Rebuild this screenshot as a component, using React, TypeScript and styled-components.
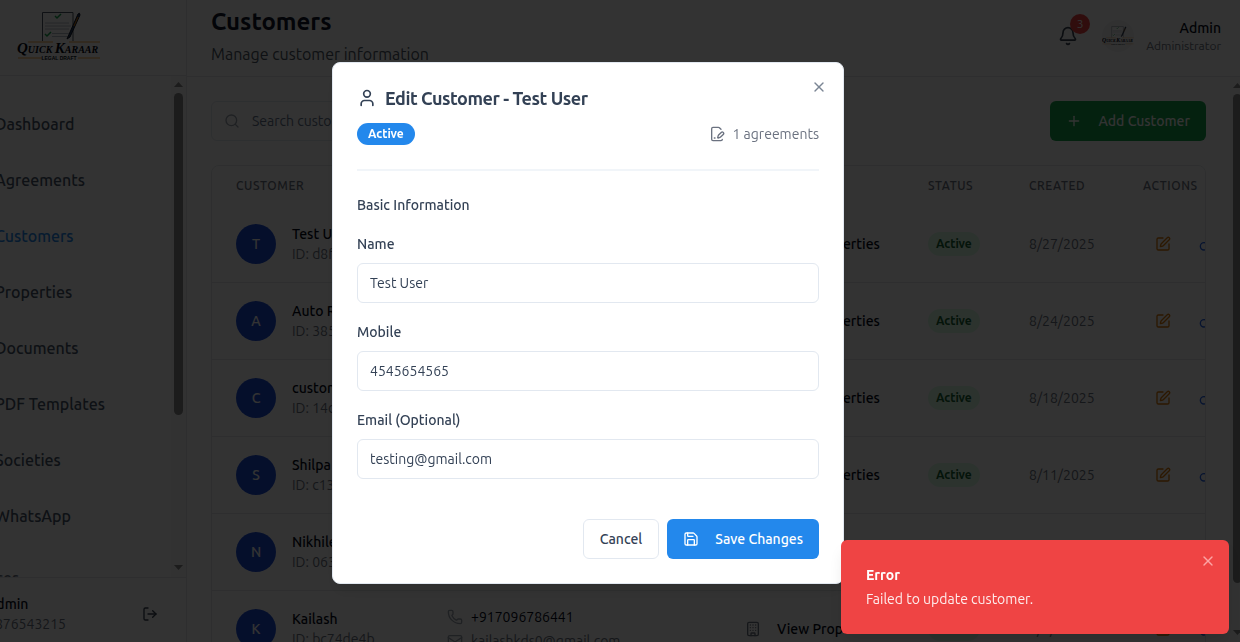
import React from "react";
import styled, { createGlobalStyle, css } from "styled-components";
import { Bell, Building, FileText, Key, LayoutDashboard, LogOut, Mail, Phone, Plus, Save, Search, SquarePen, User, X } from "lucide-react";

const GlobalStyle = createGlobalStyle`
  *, *::before, *::after { box-sizing: border-box; }
  body {
    margin: 0;
    background: #ffffff;
    color: #020817;
    font-family: Ubuntu, "Open Sans", "Noto Sans", sans-serif;
    font-size: 14px;
    line-height: 20px;
    overflow: hidden;
  }
  button, input { font: inherit; color: inherit; }
  h1, h2, h3, p { margin: 0; }
`;

const Viewport = styled.div`
  height: 100vh;
  overflow: hidden;
`;

/* The shell is wider than the window and scrolled a little sideways. */
const Shell = styled.div`
  display: flex;
  height: 100%;
  margin: 0 -5px 0 -69px;
`;

const Sidebar = styled.aside`
  display: flex;
  flex-direction: column;
  flex: none;
  width: 256px;
  border-right: 1px solid #e5e7eb;
`;

const Brand = styled.div`
  display: flex;
  align-items: center;
  justify-content: center;
  flex: none;
  height: 76px;
  padding-bottom: 4px;
  border-bottom: 1px solid #e5e7eb;
`;

const Scroller = styled.div`
  display: flex;
  flex: 1;
  min-height: 0;
`;

const Nav = styled.nav`
  display: flex;
  flex-direction: column;
  flex: 1;
  gap: 8px;
  padding: 24px 0 0 16px;
  overflow: hidden;
`;

const NavLink = styled.a<{ $active?: boolean }>`
  display: flex;
  align-items: center;
  flex: none;
  gap: 16px;
  height: 48px;
  padding: 0 12px;
  color: ${(p) => (p.$active ? "#2388ec" : "#475569")};
  font-size: 16px;
  font-weight: 500;
  line-height: 24px;
  text-decoration: none;
  white-space: nowrap;
`;

const NavGroup = styled.div`
  flex: none;
  padding: 18px 12px 0;
  color: #6b7280;
  font-size: 16px;
  font-weight: 500;
  line-height: 24px;
`;

const Bar = styled.div`
  display: flex;
  flex-direction: column;
  align-items: center;
  flex: none;
  width: 15px;
  background: #fafafa;
`;

const Arrow = styled.svg`
  flex: none;
  width: 9px;
  height: 17px;
  fill: #8b8b8b;
`;

const Track = styled.div`
  flex: 1;
  width: 9px;
`;

const Thumb = styled.div<{ $share: string }>`
  height: ${(p) => p.$share};
  border-radius: 5px;
  background: #8b8b8b;
`;

const Account = styled.div`
  display: flex;
  align-items: center;
  flex: none;
  gap: 8px;
  height: 65px;
  padding: 8px 16px 0;
  border-top: 1px solid #e5e7eb;
`;

const Avatar = styled.span<{ $small?: boolean }>`
  display: flex;
  align-items: center;
  justify-content: center;
  flex: none;
  width: ${(p) => (p.$small ? 32 : 40)}px;
  height: ${(p) => (p.$small ? 32 : 40)}px;
  border-radius: 50%;
  background: #1d4ed8;
  color: #ffffff;
  font-weight: 500;
`;

const Stack = styled.div<{ $end?: boolean; $grow?: boolean }>`
  display: flex;
  flex-direction: column;
  align-items: ${(p) => (p.$end ? "flex-end" : "flex-start")};
  flex: ${(p) => (p.$grow ? 1 : "none")};
  white-space: nowrap;
`;

const Strong = styled.span`
  font-weight: 500;
`;

const Muted = styled.span<{ $small?: boolean }>`
  color: #6b7280;
  font-size: ${(p) => (p.$small ? 12 : 14)}px;
  line-height: ${(p) => (p.$small ? 16 : 20)}px;
`;

const IconButton = styled.button<{ $tone?: string }>`
  display: inline-flex;
  align-items: center;
  justify-content: center;
  flex: none;
  height: 36px;
  padding: 0 12px;
  border: 0;
  background: none;
  color: ${(p) => p.$tone ?? "#374151"};
`;

const Content = styled.div`
  display: flex;
  flex-direction: column;
  flex: 1;
  min-width: 0;
`;

const Header = styled.header`
  display: flex;
  align-items: center;
  justify-content: space-between;
  flex: none;
  height: 77px;
  padding: 0 24px;
  border-bottom: 1px solid #e5e7eb;
`;

const PageTitle = styled.h1`
  color: #0f172a;
  font-size: 24px;
  font-weight: 700;
  line-height: 32px;
`;

const Subtitle = styled.p`
  padding: 4px 0;
  color: #4b5563;
  font-size: 16px;
  line-height: 24px;
`;

const HeaderTools = styled.div`
  display: flex;
  align-items: center;
  gap: 12px;
  padding-bottom: 4px;
`;

const BellButton = styled(IconButton)`
  position: relative;
`;

const Count = styled.span`
  position: absolute;
  top: -4px;
  right: 0;
  width: 20px;
  height: 20px;
  border-radius: 50%;
  background: #ef4444;
  color: #ffffff;
  font-size: 12px;
  line-height: 20px;
`;

const RoundLogo = styled.span`
  display: flex;
  align-items: center;
  justify-content: center;
  width: 32px;
  height: 32px;
  border-radius: 50%;
  background: #f3f4f6;
`;

const Page = styled.main`
  display: flex;
  flex-direction: column;
  flex: 1;
  gap: 24px;
  min-width: 0;
  padding: 24px;
  overflow: hidden;
`;

const Toolbar = styled.div`
  display: flex;
  justify-content: space-between;
  flex: none;
`;

const SearchBox = styled.label`
  display: flex;
  align-items: center;
  gap: 12px;
  width: 384px;
  height: 40px;
  padding: 0 12px;
  border: 1px solid #e2e8f0;
  border-radius: 6px;
  color: #9ca3af;
`;

const SearchInput = styled.input`
  flex: 1;
  min-width: 0;
  padding: 0;
  border: 0;
  background: none;
  &::placeholder { color: #64748b; opacity: 1; }
`;

const Button = styled.button<{ $kind: "add" | "primary" | "outline" }>`
  display: inline-flex;
  align-items: center;
  gap: 16px;
  height: 40px;
  padding: 0 16px;
  border: 0;
  border-radius: 6px;
  color: #ffffff;
  font-weight: 500;
  white-space: nowrap;
  ${(p) => p.$kind === "add" && css`background: #16a34a;`}
  ${(p) => p.$kind === "primary" && css`background: #2388ec;`}
  ${(p) => p.$kind === "outline" && css`
    border: 1px solid #e2e8f0;
    background: #ffffff;
    color: #334155;
  `}
`;

const Card = styled.section`
  flex: none;
  border: 1px solid #e5e7eb;
  border-radius: 8px;
  overflow: hidden;
`;

const Table = styled.table`
  width: 1040px;
  table-layout: fixed;
  border-collapse: separate;
  border-spacing: 0;
`;

const Col = styled.col<{ $w?: number }>`
  width: ${(p) => (p.$w ? `${p.$w}px` : "auto")};
`;

const Th = styled.th`
  height: 40px;
  padding: 0 24px;
  background: #fcfcfd;
  color: #6b7280;
  font-size: 12px;
  font-weight: 500;
  letter-spacing: 0.05em;
  text-align: left;
  text-transform: uppercase;
`;

const Td = styled.td`
  height: 77px;
  padding: 0 24px;
  border-bottom: 1px solid #e5e7eb;
  white-space: nowrap;
`;

const Inline = styled.div<{ $gap: number }>`
  display: flex;
  align-items: center;
  gap: ${(p) => p.$gap}px;
`;

const ContactLines = styled.div`
  display: flex;
  flex-direction: column;
  gap: 4px;
`;

const LinkButton = styled.button`
  display: flex;
  align-items: center;
  gap: 16px;
  padding: 0;
  border: 0;
  background: none;
  font-weight: 500;
  svg { color: #6b7280; }
`;

const StatusPill = styled.span`
  display: inline-block;
  padding: 2px 8px;
  border-radius: 12px;
  background: #dcfce7;
  color: #166534;
  font-size: 12px;
  font-weight: 600;
  vertical-align: middle;
`;

const Overlay = styled.div`
  position: fixed;
  inset: 0 -5px -4px -69px;
  display: flex;
  align-items: center;
  justify-content: center;
  background: rgba(0, 0, 0, 0.8);
`;

const Dialog = styled.form`
  position: relative;
  display: flex;
  flex-direction: column;
  gap: 24px;
  width: 512px;
  padding: 24px;
  border: 1px solid #e2e8f0;
  border-radius: 8px;
  background: #ffffff;
  color: #334155;
  box-shadow: 0 10px 15px -3px rgba(0, 0, 0, 0.1);
`;

const Close = styled.button<{ $tone: string; $inset: number }>`
  position: absolute;
  top: ${(p) => p.$inset}px;
  right: ${(p) => p.$inset}px;
  display: flex;
  padding: 0;
  border: 0;
  background: none;
  color: ${(p) => p.$tone};
`;

const DialogHead = styled.div`
  display: flex;
  flex-direction: column;
  gap: 14px;
  padding-bottom: 24px;
  border-bottom: 2px solid #f1f5f9;
`;

const DialogTitle = styled.h2`
  display: flex;
  align-items: center;
  gap: 8px;
  font-size: 18px;
  font-weight: 700;
  letter-spacing: -0.025em;
  line-height: 22px;
`;

const Between = styled.div`
  display: flex;
  align-items: center;
  justify-content: space-between;
`;

const Badge = styled.span`
  padding: 1px 11px;
  border-radius: 11px;
  background: #2388ec;
  color: #ffffff;
  font-size: 12px;
  font-weight: 700;
`;

const Agreements = styled.span`
  display: flex;
  align-items: center;
  gap: 8px;
  color: #6b7280;
`;

const Fields = styled.div`
  display: flex;
  flex-direction: column;
  gap: 20px;
`;

const SectionTitle = styled.h3`
  font-size: 14px;
  font-weight: 500;
  line-height: 20px;
`;

const Field = styled.label`
  display: flex;
  flex-direction: column;
  gap: 10px;
  font-weight: 500;
  line-height: 18px;
`;

const TextInput = styled.input`
  height: 40px;
  padding: 0 12px;
  border: 1px solid #e2e8f0;
  border-radius: 6px;
  background: #ffffff;
  font-weight: 400;
  outline: 0;
`;

const Actions = styled.div`
  display: flex;
  justify-content: flex-end;
  gap: 8px;
  padding-top: 16px;
`;

const Toast = styled.div`
  position: fixed;
  right: 11px;
  bottom: 8px;
  display: flex;
  flex-direction: column;
  gap: 4px;
  width: 388px;
  padding: 25px;
  border-radius: 6px;
  background: #ef4444;
  color: #ffffff;
  box-shadow: 0 10px 15px -3px rgba(0, 0, 0, 0.1);
`;

const ToastTitle = styled.strong`
  font-weight: 700;
`;

const ToastText = styled.p`
  opacity: 0.9;
`;

const Logo = ({ width }: { width: number }) => (
  <svg width={width} height={(width * 50) / 84} viewBox="0 0 84 50" role="img" aria-label="Quick Karaar">
    <path d="M25.500 30V1.500H56V30" fill="#ffffff" stroke="#4b5563" />
    <path d="M28 12h24M28 15h26M28 18h24M35 22.500h18M35 25.500h16" stroke="#b6bcc6" strokeWidth="1" />
    <path d="m38 5 2 2 4-4M28 23l2 2 4-4" fill="none" stroke="#16a34a" strokeWidth="1.500" />
    <path d="M50 28 61 3q2-2 2 1L53 26Z" fill="#1e3a5f" stroke="#111827" />
    <path d="M57 15 61 6" stroke="#d97706" />
    <path d="M11 31h25M52 31h31M1 47h24M61 47h22" stroke="#f0a040" />
    <text x="0" y="42" fontFamily="Liberation Serif, serif" fontStyle="italic" fontWeight="700" fill="#030712">
      <tspan fontSize="15">Q</tspan><tspan fontSize="10">UICK </tspan><tspan fontSize="15">K</tspan><tspan fontSize="10">ARAAR</tspan>
    </text>
    <text x="42" y="49" textAnchor="middle" fontFamily="Liberation Sans, sans-serif" fontSize="5" fontWeight="700" fill="#111827">LEGAL DRAFT</text>
  </svg>
);

const AgreementIcon = () => (
  <svg width="16" height="16" viewBox="0 0 24 24" fill="none" stroke="currentColor" strokeWidth="2" strokeLinecap="round" strokeLinejoin="round" aria-hidden="true">
    <path d="m18 5-2.414-2.414A2 2 0 0 0 14.172 2H6a2 2 0 0 0-2 2v16a2 2 0 0 0 2 2h12a2 2 0 0 0 2-2" />
    <path d="M21.378 12.626a1 1 0 0 0-3.004-3.004l-4.010 4.012a2 2 0 0 0-.506.854l-.837 2.870a.5.5 0 0 0 .62.62l2.870-.837a2 2 0 0 0 .854-.506z" />
    <path d="M8 18h1" />
  </svg>
);

const Scrollbar = ({ share }: { share: string }) => (
  <Bar aria-hidden="true">
    <Arrow viewBox="0 0 9 17"><path d="M0 11 4.500 6 9 11Z" /></Arrow>
    <Track><Thumb $share={share} /></Track>
    <Arrow viewBox="0 0 9 17"><path d="M0 5 4.500 10 9 5Z" /></Arrow>
  </Bar>
);

const links = ["Dashboard", "Agreements", "Customers", "Properties", "Documents", "PDF Templates", "Societies", "WhatsApp"];

const customers = [
  { name: "Test User", id: "d8f21c7a", phone: "4545654565", email: "testing@gmail.com", created: "8/27/2025" },
  { name: "Auto Rent", id: "385b90e1", phone: "+919876501234", email: "auto@gmail.com", created: "8/24/2025" },
  { name: "customer", id: "14c7d2aa", phone: "+919876505678", email: "customer@gmail.com", created: "8/18/2025" },
  { name: "Shilpa", id: "c13e55b0", phone: "+919876509012", email: "shilpa@gmail.com", created: "8/11/2025" },
  { name: "Nikhilesh", id: "063fa8d4", phone: "+919876503456", email: "nikhil@gmail.com", created: "8/9/2025" },
  { name: "Kailash", id: "bc74de4b", phone: "+917096786441", email: "kailashkds0@gmail.com", created: "8/9/2025" },
];

const App = () => (
  <Viewport>
    <GlobalStyle />
    <Shell>
      <Sidebar>
        <Brand><Logo width={84} /></Brand>
        <Scroller>
          <Nav>
            {links.map((label) => (
              <NavLink key={label} href="#" $active={label === "Customers"}>
                {label === "Dashboard" ? <LayoutDashboard size={20} /> : <FileText size={20} />}
                {label}
              </NavLink>
            ))}
            <NavGroup>Services</NavGroup>
          </Nav>
          <Scrollbar share="69%" />
        </Scroller>
        <Account>
          <Avatar $small>A</Avatar>
          <Stack $grow>
            <Strong>Admin</Strong>
            <Muted>9876543215</Muted>
          </Stack>
          <IconButton aria-label="Log out"><LogOut size={16} /></IconButton>
        </Account>
      </Sidebar>
      <Content>
        <Header>
          <div>
            <PageTitle>Customers</PageTitle>
            <Subtitle>Manage customer information</Subtitle>
          </div>
          <HeaderTools>
            <BellButton aria-label="Notifications"><Bell size={20} /><Count>3</Count></BellButton>
            <RoundLogo><Logo width={32} /></RoundLogo>
            <Stack $end><Strong>Admin</Strong><Muted $small>Administrator</Muted></Stack>
          </HeaderTools>
        </Header>
        <Scroller>
          <Page>
            <Toolbar>
              <SearchBox>
                <Search size={16} />
                <SearchInput type="search" aria-label="Search customers" placeholder="Search customers..." />
              </SearchBox>
              <Button $kind="add"><Plus size={16} />Add Customer</Button>
            </Toolbar>
            <Card>
              <Table>
                <colgroup><Col $w={211} /><Col $w={298} /><Col $w={183} /><Col $w={101} /><Col $w={114} /><Col /></colgroup>
                <thead>
                  <tr><Th>Customer</Th><Th>Contact</Th><Th>Properties</Th><Th>Status</Th><Th>Created</Th><Th>Actions</Th></tr>
                </thead>
                <tbody>
                  {customers.map((c) => (
                    <tr key={c.id}>
                      <Td>
                        <Inline $gap={16}>
                          <Avatar>{c.name[0].toUpperCase()}</Avatar>
                          <Stack><Strong>{c.name}</Strong><Muted>ID: {c.id}</Muted></Stack>
                        </Inline>
                      </Td>
                      <Td>
                        <ContactLines>
                          <Inline $gap={8}><Phone size={16} color="#9ca3af" />{c.phone}</Inline>
                          <Inline $gap={8}><Mail size={16} color="#9ca3af" /><Muted>{c.email}</Muted></Inline>
                        </ContactLines>
                      </Td>
                      <Td><LinkButton><Building size={16} />View Properties</LinkButton></Td>
                      <Td><StatusPill>Active</StatusPill></Td>
                      <Td><Muted>{c.created}</Muted></Td>
                      <Td>
                        <Inline $gap={4}>
                          <IconButton $tone="#d97706" aria-label={`Edit ${c.name}`}><SquarePen size={16} /></IconButton>
                          <IconButton $tone="#2563eb" aria-label={`Reset password of ${c.name}`}><Key size={16} /></IconButton>
                        </Inline>
                      </Td>
                    </tr>
                  ))}
                </tbody>
              </Table>
            </Card>
          </Page>
          <Scrollbar share="92%" />
        </Scroller>
      </Content>
    </Shell>
    <Overlay>
      <Dialog role="dialog" aria-labelledby="dialog-title" onSubmit={(e: React.FormEvent) => e.preventDefault()}>
        <Close type="button" $inset={16} $tone="#7b8594" aria-label="Close"><X size={16} /></Close>
        <DialogHead>
          <DialogTitle id="dialog-title"><User size={20} />Edit Customer - Test User</DialogTitle>
          <Between>
            <Badge>Active</Badge>
            <Agreements><AgreementIcon />1 agreements</Agreements>
          </Between>
        </DialogHead>
        <Fields>
          <SectionTitle>Basic Information</SectionTitle>
          <Field>Name<TextInput defaultValue="Test User" /></Field>
          <Field>Mobile<TextInput type="tel" defaultValue="4545654565" /></Field>
          <Field>Email (Optional)<TextInput type="email" defaultValue="testing@gmail.com" /></Field>
        </Fields>
        <Actions>
          <Button type="button" $kind="outline">Cancel</Button>
          <Button type="submit" $kind="primary"><Save size={16} />Save Changes</Button>
        </Actions>
      </Dialog>
    </Overlay>
    <Toast role="alert">
      <Close type="button" $inset={13} $tone="#fca5a5" aria-label="Dismiss"><X size={16} /></Close>
      <ToastTitle>Error</ToastTitle>
      <ToastText>Failed to update customer.</ToastText>
    </Toast>
  </Viewport>
);

export default App;
